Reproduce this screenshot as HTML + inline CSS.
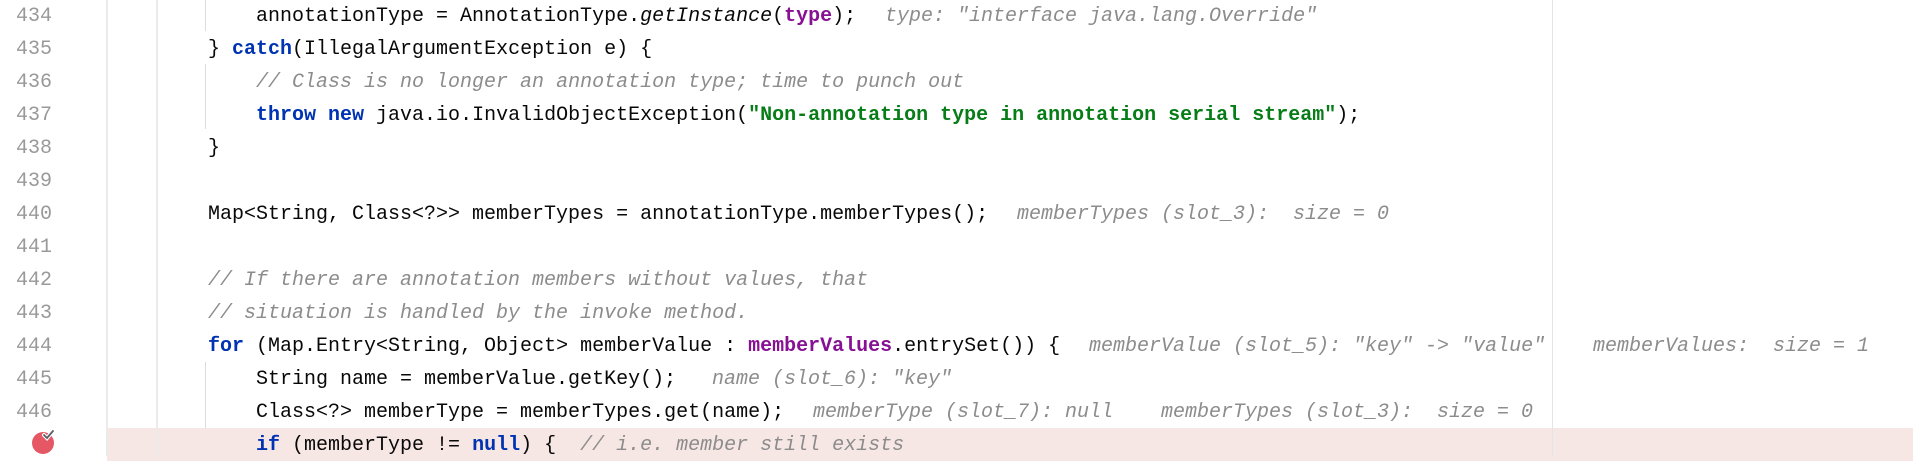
<!DOCTYPE html>
<html><head><meta charset="utf-8"><style>
html,body{margin:0;padding:0;background:#fff;}
body{width:1913px;height:456px;position:relative;overflow:hidden;font-family:"Liberation Mono",monospace;font-size:20px;}
.row{position:absolute;left:0;width:1913px;height:33px;line-height:33px;white-space:pre;}
.ln{position:absolute;left:0;width:52px;text-align:right;color:#999;}
.code{position:absolute;left:208px;color:#080808;}
.k{color:#0033b3;font-weight:bold;}
.s{color:#067d17;font-weight:bold;}
.c{color:#8c8c8c;font-style:italic;}
.p{color:#871094;font-weight:bold;}
.i{font-style:italic;}
.h{color:#8c8c8c;font-style:italic;position:absolute;}
.vl{position:absolute;top:0;height:456px;width:2px;background:#ebebeb;}
.g{position:absolute;width:1px;background:#dcdcdc;}
</style></head><body>
<div style="position:absolute;left:107px;top:428px;width:1806px;height:33px;background:#f7e7e4;"></div>
<div class="vl" style="left:106px"></div>
<div class="vl" style="left:156px"></div>
<div style="position:absolute;left:1552px;top:0;width:1px;height:456px;background:#e4e4e4"></div>
<div class="g" style="left:205px;top:0;height:31px"></div>
<div class="g" style="left:205px;top:64px;height:65px"></div>
<div class="g" style="left:205px;top:362px;height:66px"></div>

<div class="row" style="top:0"><span class="ln">434</span><span class="code">    annotationType = AnnotationType.<span class="i">getInstance</span>(<span class="p">type</span>);</span><span class="h" style="left:885px">type: "interface java.lang.Override"</span></div>
<div class="row" style="top:33px"><span class="ln">435</span><span class="code">} <span class="k">catch</span>(IllegalArgumentException e) {</span></div>
<div class="row" style="top:66px"><span class="ln">436</span><span class="code">    <span class="c">// Class is no longer an annotation type; time to punch out</span></span></div>
<div class="row" style="top:99px"><span class="ln">437</span><span class="code">    <span class="k">throw new</span> java.io.InvalidObjectException(<span class="s">"Non-annotation type in annotation serial stream"</span>);</span></div>
<div class="row" style="top:132px"><span class="ln">438</span><span class="code">}</span></div>
<div class="row" style="top:165px"><span class="ln">439</span></div>
<div class="row" style="top:198px"><span class="ln">440</span><span class="code">Map&lt;String, Class&lt;?&gt;&gt; memberTypes = annotationType.memberTypes();</span><span class="h" style="left:1017px">memberTypes (slot_3):  size = 0</span></div>
<div class="row" style="top:231px"><span class="ln">441</span></div>
<div class="row" style="top:264px"><span class="ln">442</span><span class="code"><span class="c">// If there are annotation members without values, that</span></span></div>
<div class="row" style="top:297px"><span class="ln">443</span><span class="code"><span class="c">// situation is handled by the invoke method.</span></span></div>
<div class="row" style="top:330px"><span class="ln">444</span><span class="code"><span class="k">for</span> (Map.Entry&lt;String, Object&gt; memberValue : <span class="p">memberValues</span>.entrySet()) {</span><span class="h" style="left:1089px">memberValue (slot_5): "key" -&gt; "value"</span><span class="h" style="left:1593px">memberValues:  size = 1</span></div>
<div class="row" style="top:363px"><span class="ln">445</span><span class="code">    String name = memberValue.getKey();</span><span class="h" style="left:712px">name (slot_6): "key"</span></div>
<div class="row" style="top:396px"><span class="ln">446</span><span class="code">    Class&lt;?&gt; memberType = memberTypes.get(name);</span><span class="h" style="left:813px">memberType (slot_7): null</span><span class="h" style="left:1161px">memberTypes (slot_3):  size = 0</span></div>
<div class="row" style="top:429px"><span class="code">    <span class="k">if</span> (memberType != <span class="k">null</span>) {  <span class="c">// i.e. member still exists</span></span></div>

<svg style="position:absolute;left:28px;top:428px" width="32" height="30" viewBox="0 0 32 30">
<circle cx="15" cy="15" r="11" fill="#e55765"/>
<path d="M16 7 L19 10 L25 3" stroke="#fff" stroke-width="4" fill="none" stroke-linecap="round"/>
<path d="M16 7 L19 10 L25 3" stroke="#5a5d63" stroke-width="1.8" fill="none" stroke-linecap="round"/>
</svg>
</body></html>
